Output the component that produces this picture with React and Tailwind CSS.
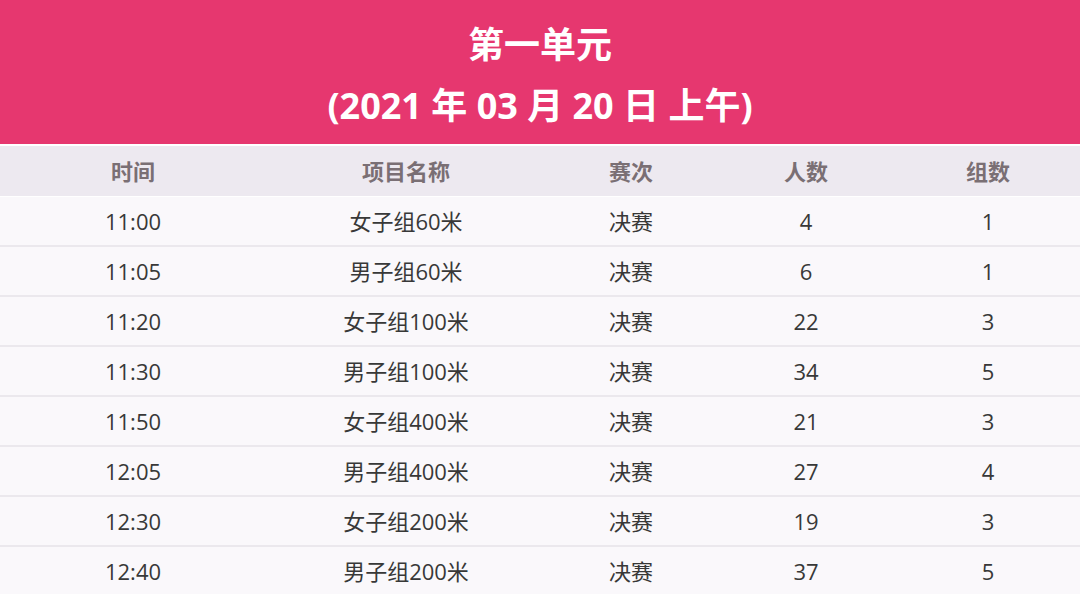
import React from "react";

const rows = [
  ["11:00", "女子组60米", "决赛", "4", "1"],
  ["11:05", "男子组60米", "决赛", "6", "1"],
  ["11:20", "女子组100米", "决赛", "22", "3"],
  ["11:30", "男子组100米", "决赛", "34", "5"],
  ["11:50", "女子组400米", "决赛", "21", "3"],
  ["12:05", "男子组400米", "决赛", "27", "4"],
  ["12:30", "女子组200米", "决赛", "19", "3"],
  ["12:40", "男子组200米", "决赛", "37", "5"],
];

const cols = ["w-[266px]", "w-[280px]", "w-[170px]", "w-[180px]", "w-[184px]"];
const heads = ["时间", "项目名称", "赛次", "人数", "组数"];

const App = () => {
  return (
    <div
      className="w-[1080px] h-[594px] overflow-hidden bg-white"
      style={{ fontFamily: '"Open Sans", "Noto Sans CJK SC", sans-serif' }}
    >
      {/* Title banner */}
      <header className="h-[144px] bg-[#e6376f] flex flex-col items-center text-white font-bold text-[36px]">
        <h1 className="mt-[21px] leading-[48px]">第一单元</h1>
        <p className="mt-[13px] leading-[48px]">(2021 年 03 月 20 日 上午)</p>
      </header>

      <div className="mt-[2px] h-[50px] bg-[#ede9f0] flex items-center text-[22px] font-bold text-[#7a6f74]">
        {heads.map((h, i) => (
          <div key={h} className={`${cols[i]} text-center`}>
            {h}
          </div>
        ))}
      </div>

      <div className="mt-[1px] flex flex-col">
        {rows.map((r) => (
          <div
            key={r[0]}
            className="h-[50px] bg-[#faf8fb] border-b-[2px] border-[#ebe8ed] flex items-center text-[22px] text-[#383838]"
          >
            {r.map((c, i) => (
              <div key={i} className={`${cols[i]} text-center`}>
                {c}
              </div>
            ))}
          </div>
        ))}
      </div>
    </div>
  );
};

export default App;
